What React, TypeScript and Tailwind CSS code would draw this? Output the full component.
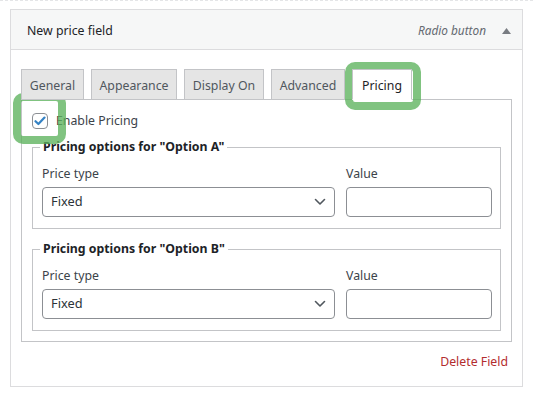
import React from "react"

const tabs = [
  { label: "General", width: "w-[63px]", active: false },
  { label: "Appearance", width: "w-[86px]", active: false },
  { label: "Display On", width: "w-[80px]", active: false },
  { label: "Advanced", width: "w-[74px]", active: false },
  { label: "Pricing", width: "w-[60px]", active: true },
]

const options = ["Option A", "Option B"]

function Chevron() {
  return (
    <svg width="12" height="8" viewBox="0 0 12 8" fill="none">
      <path d="M1.5 1.5 6 6l4.5-4.5" stroke="#50575e" strokeWidth="1.6" strokeLinecap="round" strokeLinejoin="round" />
    </svg>
  )
}

function PricingFieldset({ option, first }: { option: string; first: boolean }) {
  return (
    <fieldset className={`border border-[#c3c4c7] pl-[9px] pr-[8px] pb-[11px] ${first ? "mt-[9px]" : "mt-[11px]"}`}>
      <legend className="-ml-[2px] px-[3px] text-[12.3px] leading-[18px] font-bold text-[#1d2327]">
        Pricing options for "{option}"
      </legend>
      <div className="grid grid-cols-[293px_1fr] gap-x-[11px] gap-y-[4px] pt-[9px]">
        <label className="text-[12.3px] leading-[18px] text-[#3c434a]">Price type</label>
        <label className="text-[12.3px] leading-[18px] text-[#3c434a]">Value</label>
        <div className="flex h-[30px] items-center justify-between rounded-[4px] border border-[#8c8f94] pl-[8px] pr-[8px] text-[12.8px] text-[#2c3338]">
          <span>Fixed</span>
          <Chevron />
        </div>
        <input
          type="text"
          readOnly
          className="h-[30px] w-full rounded-[4px] border border-[#8c8f94] bg-white px-[8px] text-[12.8px] outline-none"
        />
      </div>
    </fieldset>
  )
}

export default function App() {
  return (
    <div className="relative min-h-[393px] bg-white font-['Noto_Sans',sans-serif] border-t border-dashed border-[#e4e5e7]">
      <div className="mx-[10px] mt-[8px] w-[513px] border border-[#dcdcde]">
        {/* Header */}
        <div className="flex h-[40px] items-center justify-between border-b border-[#dcdcde] bg-[#f6f7f7] pt-[3px] pl-[16px] pr-[11px]">
          <span className="text-[12.3px] text-[#1d2327]">New price field</span>
          <div className="flex items-center gap-[16px]">
            <span className="text-[11.8px] italic text-[#646970]">Radio button</span>
            <svg width="9" height="6" viewBox="0 0 9 6">
              <path d="M0 6 4.5 0 9 6z" fill="#787c82" />
            </svg>
          </div>
        </div>

        {/* Body */}
        <div className="px-[10px] pt-[19px]">
          <div className="relative z-10 -mb-px flex gap-[7px]">
            {tabs.map((tab) => (
              <div
                key={tab.label}
                className={`flex h-[31px] items-center justify-center border pt-[3px] text-[12.3px] ${tab.width} ${
                  tab.active
                    ? "border-[#c3c4c7] border-b-white bg-white text-[#1d2327]"
                    : "border-[#c3c4c7] bg-[#e5e5e5] text-[#50575e]"
                }`}
              >
                {tab.label}
              </div>
            ))}
          </div>

          <div className="border border-[#c3c4c7] px-[10px] pt-[13px] pb-[10px]">
            <label className="flex items-center gap-[8px] text-[12.3px] leading-[16px] text-[#3c434a]">
              <span className="flex h-[16px] w-[16px] items-center justify-center rounded-[4px] border border-[#8c8f94] bg-white">
                <svg width="12" height="10" viewBox="0 0 12 10">
                  <path d="M1.5 5.2 4.4 8 10.5 1.6" fill="none" stroke="#3582c4" strokeWidth="2.2" strokeLinecap="round" strokeLinejoin="round" />
                </svg>
              </span>
              Enable Pricing
            </label>
            {options.map((o, i) => (
              <PricingFieldset key={o} option={o} first={i === 0} />
            ))}
          </div>

          <div className="flex justify-end pt-[11px] pb-[15px] pr-[4px]">
            <a className="text-[12.3px] leading-[18px] text-[#b32d2e]">Delete Field</a>
          </div>
        </div>
      </div>

      {/* Highlight rings */}
      <div className="pointer-events-none absolute left-[13px] top-[92px] h-[51px] w-[53px] rounded-[10px] border-[8px] border-[rgba(92,178,92,0.78)]" />
      <div className="pointer-events-none absolute left-[345px] top-[61px] h-[48px] w-[76px] rounded-[10px] border-[8px] border-[rgba(92,178,92,0.78)]" />
    </div>
  )
}
